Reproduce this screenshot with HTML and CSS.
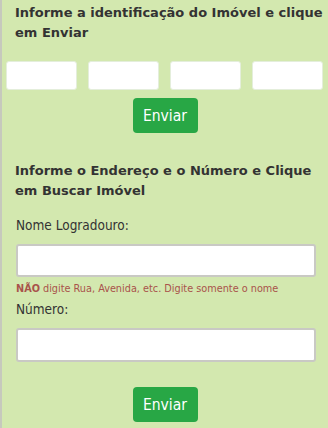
FILE: index.html
```html
<!DOCTYPE html>
<html lang="pt-BR">
<head>
<meta charset="UTF-8">
<title>Consulta de Imóvel</title>
<link rel="stylesheet" href="styles.css">
</head>
<body>
<div class="panel">
  <!-- Busca por identificação -->
  <h2 class="titulo">Informe a identificação do Imóvel e clique em Enviar</h2>
  <div class="id-row">
    <input type="text" class="id-campo">
    <input type="text" class="id-campo">
    <input type="text" class="id-campo">
    <input type="text" class="id-campo">
  </div>
  <button class="btn-enviar">Enviar</button>

  <!-- Busca por endereço -->
  <h2 class="titulo titulo-endereco">Informe o Endereço e o Número e Clique em Buscar Imóvel</h2>
  <div class="form-grupo">
    <label class="rotulo">Nome Logradouro:</label>
    <input type="text" class="campo">
    <div class="ajuda"><b>NÃO</b> digite Rua, Avenida, etc. Digite somente o nome</div>
    <label class="rotulo rotulo-numero">Número:</label>
    <input type="text" class="campo campo-numero">
  </div>
  <button class="btn-enviar btn-enviar-endereco">Enviar</button>
</div>
</body>
</html>
```

FILE: styles.css
```css
body {
  font-family: 'DejaVu Sans', Verdana, sans-serif;
  margin: 0;
  background-color: #d3e8af;
  border-left: 2px solid #c6c9bd;
  min-height: 100vh;
  color: #333;
}

.panel {
  padding-top: 3px;
}

.titulo {
  font-size: 13px;
  font-weight: bold;
  line-height: 20px;
  margin: 0;
  padding: 0 2px 0 13px;
  color: #333;
}

.titulo-endereco {
  margin-top: 28px;
}

.id-row {
  display: flex;
  gap: 11px;
  margin-top: 18px;
  padding: 0 4px 0 4px;
}

.id-campo {
  width: 71px;
  height: 29px;
  box-sizing: border-box;
  border: 1px solid #e4eedb;
  border-radius: 3px;
  background-color: #fff;
  padding: 0;
}

.btn-enviar {
  display: block;
  margin: 8px auto 0;
  width: 65px;
  height: 35px;
  background-color: #28a745;
  color: #fff;
  border: none;
  border-radius: 4px;
  font-family: 'DejaVu Sans Condensed', 'DejaVu Sans', sans-serif;
  font-size: 15.5px;
  padding: 0;
}

.btn-enviar-endereco {
  margin-top: 25px;
}

.form-grupo {
  padding: 0 12px 0 14px;
}

.rotulo {
  display: block;
  font-family: 'DejaVu Sans Condensed', 'DejaVu Sans', sans-serif;
  font-size: 13.5px;
  line-height: 18px;
  margin-top: 15px;
  color: #333;
}

.rotulo-numero {
  margin-top: 3px;
}

.campo {
  display: block;
  width: 100%;
  height: 33px;
  box-sizing: border-box;
  margin-top: 10px;
  border: 2px solid #c9c9c4;
  border-radius: 3px;
  background-color: #fff;
}

.campo-numero {
  height: 34px;
}

.ajuda {
  font-family: 'DejaVu Sans Condensed', 'DejaVu Sans', sans-serif;
  font-size: 10.8px;
  line-height: 16px;
  margin-top: 4px;
  color: #a9534b;
}
```
